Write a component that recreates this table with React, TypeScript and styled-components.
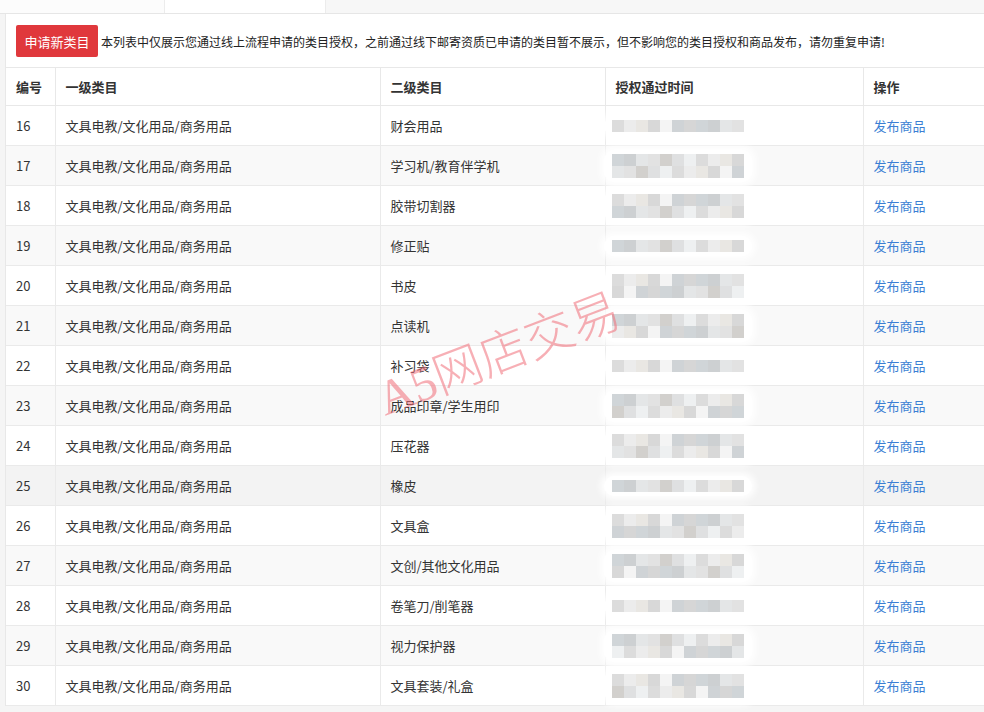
import styled, { createGlobalStyle } from "styled-components";

const GlobalStyle = createGlobalStyle`
  html, body {
    margin: 0;
    padding: 0;
    background: #f5f5f5;
    overflow: hidden;
  }
  body {
    font-family: "Noto Sans CJK SC", "Noto Sans", "Liberation Sans", sans-serif;
    color: #333;
  }
`;

const Page = styled.div`
  width: 1010px;
  height: 712px;
  overflow: hidden;
`;

const Tabs = styled.div`
  display: flex;
  height: 14px;
  background: #f7f7f7;
  border-bottom: 1px solid #e6e6e6;
  box-sizing: border-box;
`;

const Tab = styled.div<{ $active?: boolean; $w: number }>`
  width: ${(p) => p.$w}px;
  background: ${(p) => (p.$active ? "#fff" : "#fcfcfc")};
  border-right: 1px solid #ececec;
  box-sizing: border-box;
`;

const Panel = styled.div`
  position: relative;
  margin-left: 5px;
  background: #fff;
  border-left: 1px solid #e8e8e8;
  padding-top: 11px;
`;

const Toolbar = styled.div`
  display: flex;
  align-items: center;
  gap: 3px;
  padding-left: 10px;
  height: 32px;
  margin-bottom: 10px;
`;

const RedButton = styled.button`
  width: 82px;
  height: 32px;
  border: none;
  border-radius: 2px;
  background: #e0383c;
  color: #fff;
  font-family: inherit;
  font-size: 13px;
  padding: 0;
  cursor: pointer;
`;

const Notice = styled.span`
  font-size: 12px;
  color: #222;
  white-space: nowrap;
`;

const Table = styled.table`
  border-collapse: collapse;
  table-layout: fixed;
  width: 994px;
  font-size: 13px;
`;

const Th = styled.th`
  height: 37px;
  text-align: left;
  font-weight: 700;
  color: #333;
  padding: 0 10px;
  border: 1px solid #e8e8e8;
  border-left: none;
  &:last-child {
    border-right: none;
  }
`;

const Tr = styled.tr<{ $bg: string }>`
  background: ${(p) => p.$bg};
`;

const Td = styled.td`
  height: 39px;
  padding: 0 10px;
  color: #333;
  border-right: 1px solid #eaeaea;
  border-bottom: 1px solid #eaeaea;
  white-space: nowrap;
  &:last-child {
    border-right: none;
  }
`;

const TimeCell = styled.td`
  height: 39px;
  padding: 0;
  border-bottom: 1px solid #eaeaea;
  border-right: 1px solid #eaeaea;
`;

const Blur = styled.div`
  display: inline-flex;
  flex-direction: column;
  margin-left: -2px;
  padding: 4px 8px;
  background: #fff;
  border-radius: 10px;
  box-shadow: 0 0 6px 4px rgba(255, 255, 255, 0.85);
  vertical-align: middle;
`;

const MosaicRow = styled.div`
  display: flex;
`;

const Pixel = styled.span<{ $c: string }>`
  width: 12px;
  height: 12px;
  background: ${(p) => p.$c};
`;

const Link = styled.a`
  color: #3b7fd4;
  text-decoration: none;
  cursor: pointer;
`;

const Watermark = styled.div`
  position: absolute;
  left: 384px;
  top: 344px;
  font-family: "Liberation Serif", "Noto Sans CJK SC", serif;
  font-weight: 300;
  font-size: 49px;
  color: rgba(240, 110, 120, 0.55);
  transform: rotate(-21deg);
  transform-origin: left bottom;
  white-space: nowrap;
  pointer-events: none;
`;

const widths = [49, 325, 225, 258, 137];

const second = [
  "财会用品",
  "学习机/教育伴学机",
  "胶带切割器",
  "修正贴",
  "书皮",
  "点读机",
  "补习袋",
  "成品印章/学生用印",
  "压花器",
  "橡皮",
  "文具盒",
  "文创/其他文化用品",
  "卷笔刀/削笔器",
  "视力保护器",
  "文具套装/礼盒",
];

const lines = [1, 2, 2, 1, 2, 2, 1, 2, 2, 1, 2, 2, 1, 2, 2];

const shades = ["#dcdcdc", "#cfd3d6", "#e2e2e2", "#ececec", "#d6d6d6", "#d2d0cd", "#e9e7e3", "#d0d5d8", "#dfe0e1", "#d8d8d8", "#cdd0d2", "#eef0f1", "#f4f4f4", "#e4e6e7"];

const pick = (i: number, j: number, k: number) => shades[(i * 7 + j * 5 + k * 3 + i * j) % shades.length];

const Mosaic = ({ row }: { row: number }) => (
  <Blur>
    {Array.from({ length: lines[row] }).map((_, j) => (
      <MosaicRow key={j}>
        {Array.from({ length: 11 }).map((_, k) => (
          <Pixel key={k} $c={pick(row, j, k)} />
        ))}
      </MosaicRow>
    ))}
  </Blur>
);

export default function App() {
  return (
    <Page>
      <GlobalStyle />
      <Tabs>
        <Tab $w={165} />
        <Tab $w={161} $active />
      </Tabs>
      <Panel>
        <Toolbar>
          <RedButton>申请新类目</RedButton>
          <Notice>
            本列表中仅展示您通过线上流程申请的类目授权，之前通过线下邮寄资质已申请的类目暂不展示，但不影响您的类目授权和商品发布，请勿重复申请!
          </Notice>
        </Toolbar>
        <Table>
          <colgroup>
            {widths.map((w, i) => (
              <col key={i} style={{ width: w }} />
            ))}
          </colgroup>
          <thead>
            <tr>
              <Th>编号</Th>
              <Th>一级类目</Th>
              <Th>二级类目</Th>
              <Th>授权通过时间</Th>
              <Th>操作</Th>
            </tr>
          </thead>
          <tbody>
            {second.map((name, i) => (
              <Tr key={name} $bg={i === 9 ? "#f3f3f3" : i % 2 === 1 ? "#f9f9f9" : "#fff"}>
                <Td>{16 + i}</Td>
                <Td>文具电教/文化用品/商务用品</Td>
                <Td>{name}</Td>
                <TimeCell>
                  <Mosaic row={i} />
                </TimeCell>
                <Td>
                  <Link>发布商品</Link>
                </Td>
              </Tr>
            ))}
          </tbody>
        </Table>
        <Watermark>A5网店交易</Watermark>
      </Panel>
    </Page>
  );
}
